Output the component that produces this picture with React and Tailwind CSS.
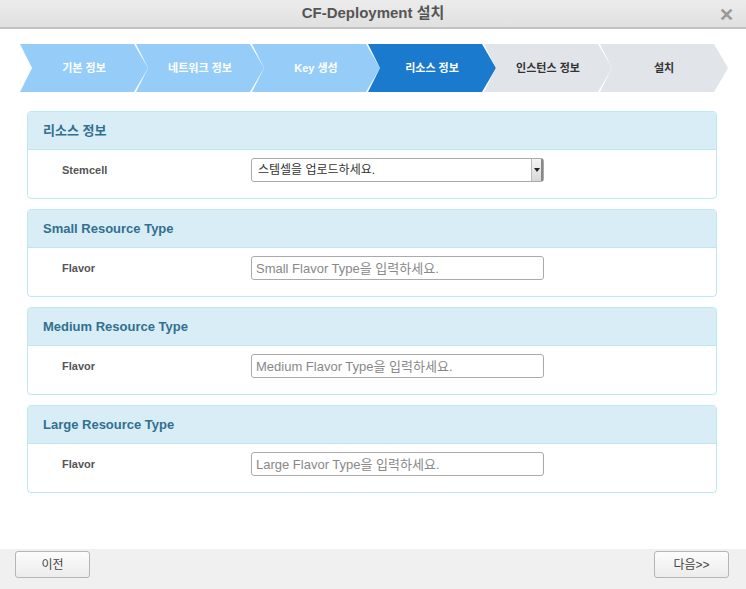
import React from 'react';

const steps = [
    { label: '기본 정보', state: 'done' },
    { label: '네트워크 정보', state: 'done' },
    { label: 'Key 생성', state: 'done' },
    { label: '리소스 정보', state: 'active' },
    { label: '인스턴스 정보', state: 'todo' },
    { label: '설치', state: 'todo' },
];

const stepColors = {
    done: 'bg-[#96cdf8] text-white',
    active: 'bg-[#1a7ace] text-white',
    todo: 'bg-[#e1e4e8] text-[#333]',
};

const panels = [
    { title: 'Small Resource Type', placeholder: 'Small Flavor Type을 입력하세요.' },
    { title: 'Medium Resource Type', placeholder: 'Medium Flavor Type을 입력하세요.' },
    { title: 'Large Resource Type', placeholder: 'Large Flavor Type을 입력하세요.' },
];

const font = { fontFamily: '"Liberation Sans", "Noto Sans CJK KR", sans-serif' };

const Panel = ({ title, children }) => (
    <div className="border border-[#bce8f1] rounded-[4px] h-[88px] overflow-hidden bg-white">
        <div className="h-[38px] bg-[#d9edf7] border-b border-[#bce8f1] flex items-center px-[15px]">
            <h3 className="text-[13px] font-bold text-[#31708f]">{title}</h3>
        </div>
        <div className="flex items-center pt-[8px]">
            {children}
        </div>
    </div>
);

const App = () => {
    return (
        <div className="w-[746px] h-[589px] bg-white flex flex-col overflow-hidden" style={font}>
            {/* Title bar */}
            <div className="relative h-[29px] bg-gradient-to-b from-[#ececec] to-[#e0e0e0] border-b-2 border-[#c2c2c2] flex items-center justify-center">
                <span className="text-[15px] font-bold text-[#555]">CF-Deployment 설치</span>
                <span className="absolute right-[12px] top-[2px] text-[18px] font-bold text-[#999]">✕</span>
            </div>

            {/* Steps */}
            <div className="flex ml-[20px] mt-[15px] h-[48px]">
                {steps.map((s) => (
                    <div
                        key={s.label}
                        className={`w-[128px] -mr-[12px] h-[48px] flex items-center justify-center text-[11px] font-bold ${stepColors[s.state]} [clip-path:polygon(0_0,114px_0,128px_50%,114px_100%,0_100%,12px_50%)]`}
                    >
                        {s.label}
                    </div>
                ))}
            </div>

            {/* Panels */}
            <div className="flex flex-col gap-[10px] mx-[27px] mt-[19px] w-[690px]">
                <Panel title="리소스 정보">
                    <label className="w-[223px] pl-[34px] text-[11px] font-bold text-[#555]">Stemcell</label>
                    <div className="w-[293px] h-[24px] border border-[#aaa] rounded-[3px] flex items-center justify-between bg-white">
                        <span className="pl-[6px] text-[12px] text-[#333]">스템셀을 업로드하세요.</span>
                        <span className="w-[12px] h-[22px] bg-gradient-to-b from-[#f5f5f5] to-[#d8d8d8] border-l border-[#bbb] border-r-2 border-r-[#888] flex items-center justify-center">
                            <svg width="6" height="4" viewBox="0 0 6 4"><path d="M0 0h6L3 4z" fill="#222" /></svg>
                        </span>
                    </div>
                </Panel>
                {panels.map((p) => (
                    <Panel key={p.title} title={p.title}>
                        <label className="w-[223px] pl-[34px] text-[11px] font-bold text-[#555]">Flavor</label>
                        <input
                            type="text"
                            placeholder={p.placeholder}
                            className="w-[293px] h-[24px] border border-[#aaa] rounded-[3px] px-[4px] text-[13px] text-[#333] placeholder:text-[#888] outline-none"
                        />
                    </Panel>
                ))}
            </div>

            {/* Footer */}
            <div className="mt-auto h-[40px] bg-[#f0f0f0] flex items-start justify-between pl-[15px] pr-[17px] pt-[2px]">
                <button className="w-[75px] h-[27px] border border-[#b5b5b5] rounded-[3px] bg-gradient-to-b from-[#fcfcfc] to-[#ececec] text-[12px] text-[#444]">이전</button>
                <button className="w-[75px] h-[27px] border border-[#b5b5b5] rounded-[3px] bg-gradient-to-b from-[#fcfcfc] to-[#ececec] text-[12px] text-[#444]">다음&gt;&gt;</button>
            </div>
        </div>
    );
};

export default App;
